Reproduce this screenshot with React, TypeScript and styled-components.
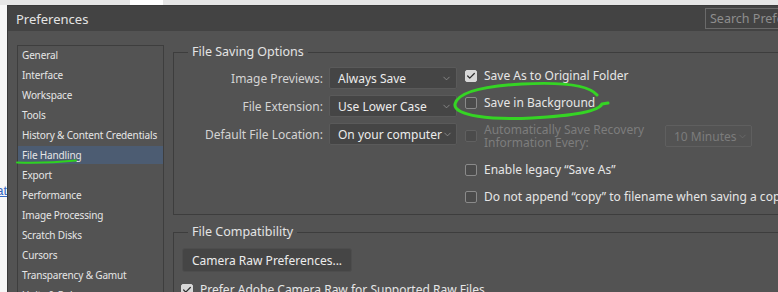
import React from 'react';
import styled, { createGlobalStyle } from 'styled-components';
import { ChevronDown, Check } from 'lucide-react';

const GlobalStyle = createGlobalStyle`
  html, body {
    margin: 0;
    padding: 0;
    background: #ffffff;
    overflow: hidden;
  }
  * { box-sizing: border-box; }
`;

const FONT = `'Noto Sans', 'Open Sans', sans-serif`;

const Page = styled.div`
  width: 778px;
  height: 292px;
  overflow: hidden;
  display: flex;
  flex-direction: column;
  font-family: ${FONT};
  position: relative;
`;

const TopStrip = styled.div`
  height: 5px;
  flex-shrink: 0;
  background: linear-gradient(
    to right,
    #e6e6e6 0,
    #e6e6e6 130px,
    #ffffff 130px,
    #ffffff 163px,
    #e6e6e6 163px
  );
`;

const Row = styled.div`
  display: flex;
  flex: 1;
  min-height: 0;
`;

const Gutter = styled.div`
  width: 7px;
  flex-shrink: 0;
  background: #f7f7f7;
  overflow: hidden;
  display: flex;
  justify-content: flex-end;
  padding-top: 178px;
`;

const PageLink = styled.a`
  font-family: 'Liberation Sans', Arial, sans-serif;
  font-size: 13px;
  color: #3568c2;
  text-decoration: underline;
  white-space: nowrap;
  flex-shrink: 0;
  line-height: 16px;
  height: 16px;
`;

const Dialog = styled.div`
  width: 900px;
  flex-shrink: 0;
  background: #535353;
  border-left: 1px solid #3a3a3a;
  border-top: 1px solid #3a3a3a;
  display: flex;
  flex-direction: column;
  color: #e2e2e2;
`;

const TitleBar = styled.div`
  height: 25px;
  flex-shrink: 0;
  background: #434343;
  display: grid;
  grid-template-columns: 697px 1fr;
  align-items: center;
`;

const Title = styled.div`
  padding-left: 8px;
  font-size: 13px;
  color: #e4e4e4;
`;

const SearchBox = styled.div`
  height: 21px;
  border: 1px solid #6a6a6a;
  border-right: none;
  display: flex;
  align-items: center;
  padding-left: 4px;
  font-size: 12.5px;
  color: #8e8e8e;
  white-space: nowrap;
`;

const Body = styled.div`
  display: flex;
  gap: 9px;
  padding: 13px 0 0 9px;
  flex: 1;
  min-height: 0;
`;

const Sidebar = styled.ul`
  list-style: none;
  margin: 1px 0 0 0;
  padding: 0;
  width: 147px;
  flex-shrink: 0;
  border: 1px solid #3e3e3e;
  border-bottom: none;
`;

const NavItem = styled.li<{ $active?: boolean }>`
  height: 18px;
  margin-bottom: 2px;
  padding-left: 4px;
  display: flex;
  align-items: center;
  font-size: 10px;
  letter-spacing: -0.15px;
  white-space: nowrap;
  color: #e6e6e6;
  background: ${(p) => (p.$active ? '#4c5c72' : 'transparent')};
`;

const Content = styled.div`
  width: 700px;
  flex-shrink: 0;
  display: flex;
  flex-direction: column;
`;

const Group = styled.fieldset<{ $gapTop?: number }>`
  margin: ${(p) => p.$gapTop ?? 0}px 0 0 0;
  padding: 2px 0 4px 0;
  border: 1px solid #3d3d3d;
  min-width: 0;
`;

const GroupTitle = styled.legend`
  margin-left: 14px;
  padding: 0 4px;
  font-size: 12.5px;
  line-height: 16px;
  color: #e4e4e4;
`;

const SavingLayout = styled.div`
  display: flex;
  gap: 8px;
`;

const FormGrid = styled.div`
  display: grid;
  grid-template-columns: 149px 128px;
  grid-auto-rows: 22px;
  column-gap: 6px;
  row-gap: 6px;
  padding-top: 5px;
  align-content: start;
`;

const FieldLabel = styled.div`
  text-align: right;
  align-self: center;
  font-size: 12px;
  color: #d4d4d4;
  white-space: nowrap;
`;

const Select = styled.div<{ $disabled?: boolean; $width?: number }>`
  height: 22px;
  width: ${(p) => (p.$width ? `${p.$width}px` : 'auto')};
  flex-shrink: 0;
  border: 1px solid ${(p) => (p.$disabled ? '#5f5f5f' : '#5a5a5a')};
  border-radius: 2px;
  background: ${(p) => (p.$disabled ? 'transparent' : '#454545')};
  display: flex;
  align-items: center;
  justify-content: space-between;
  padding: 0 4px 0 8px;
  font-size: 12px;
  white-space: nowrap;
  overflow: hidden;
  color: ${(p) => (p.$disabled ? '#7c7c7c' : '#ececec')};

  svg {
    flex-shrink: 0;
    color: ${(p) => (p.$disabled ? '#707070' : '#a0a0a0')};
  }
`;

const Options = styled.div`
  display: flex;
  flex-direction: column;
`;

const Option = styled.div<{ $tall?: boolean }>`
  display: flex;
  align-items: center;
  height: ${(p) => (p.$tall ? 40 : 27)}px;
  white-space: nowrap;
`;

const Box = styled.span<{ $checked?: boolean; $disabled?: boolean }>`
  width: 12px;
  height: 12px;
  flex-shrink: 0;
  border-radius: 2px;
  margin-right: 7px;
  display: flex;
  align-items: center;
  justify-content: center;
  border: 1px solid
    ${(p) => (p.$checked ? '#d8d8d8' : p.$disabled ? '#606060' : '#8a8a8a')};
  background: ${(p) => (p.$checked ? '#d8d8d8' : '#4b4b4b')};
  color: #2e2e2e;
`;

const OptionText = styled.span<{ $disabled?: boolean; $width?: number }>`
  font-size: 12px;
  line-height: 13px;
  color: ${(p) => (p.$disabled ? '#7d7d7d' : '#e6e6e6')};
  width: ${(p) => (p.$width ? `${p.$width}px` : 'auto')};
  white-space: ${(p) => (p.$width ? 'normal' : 'nowrap')};
`;

const CompatBody = styled.div`
  padding: 6px 0 0 8px;
  display: flex;
  flex-direction: column;
`;

const RawButton = styled.button`
  width: 170px;
  height: 24px;
  font-family: ${FONT};
  font-size: 12px;
  white-space: nowrap;
  color: #ececec;
  background: #454545;
  border: 1px solid #4d4d4d;
  border-radius: 3px;
  text-align: left;
  padding: 0 9px;
`;

const CompatOption = styled(Option)`
  margin-top: 4px;
  margin-left: -1px;
`;

const Annotations = styled.svg`
  position: absolute;
  top: 0;
  left: 0;
  pointer-events: none;
`;

const navItems = [
  'General',
  'Interface',
  'Workspace',
  'Tools',
  'History & Content Credentials',
  'File Handling',
  'Export',
  'Performance',
  'Image Processing',
  'Scratch Disks',
  'Cursors',
  'Transparency & Gamut',
  'Units & Rulers',
];

const fields = [
  { label: 'Image Previews:', value: 'Always Save' },
  { label: 'File Extension:', value: 'Use Lower Case' },
  { label: 'Default File Location:', value: 'On your computer' },
];

const CheckBox: React.FC<{ checked?: boolean; disabled?: boolean }> = ({ checked, disabled }) => (
  <Box $checked={checked} $disabled={disabled}>
    {checked && <Check size={10} strokeWidth={3} />}
  </Box>
);

export default function App() {
  return (
    <>
      <GlobalStyle />
      <Page>
        <TopStrip />
        <Row>
          <Gutter>
            <PageLink href="#">Format</PageLink>
          </Gutter>
          <Dialog>
            <TitleBar>
              <Title>Preferences</Title>
              <SearchBox>Search Preferences</SearchBox>
            </TitleBar>
            <Body>
              <Sidebar>
                {navItems.map((item) => (
                  <NavItem key={item} $active={item === 'File Handling'}>
                    {item}
                  </NavItem>
                ))}
              </Sidebar>
              <Content>
                <Group>
                  <GroupTitle>File Saving Options</GroupTitle>
                  <SavingLayout>
                    <FormGrid>
                      {fields.map((f) => (
                        <React.Fragment key={f.label}>
                          <FieldLabel>{f.label}</FieldLabel>
                          <Select>
                            {f.value}
                            <ChevronDown size={11} strokeWidth={1.5} />
                          </Select>
                        </React.Fragment>
                      ))}
                    </FormGrid>
                    <Options>
                      <Option>
                        <CheckBox checked />
                        <OptionText>Save As to Original Folder</OptionText>
                      </Option>
                      <Option>
                        <CheckBox />
                        <OptionText>Save in Background</OptionText>
                      </Option>
                      <Option $tall>
                        <CheckBox disabled />
                        <OptionText $disabled $width={181}>
                          Automatically Save Recovery Information Every:
                        </OptionText>
                        <Select $disabled $width={87}>
                          10 Minutes
                          <ChevronDown size={11} strokeWidth={1.5} />
                        </Select>
                      </Option>
                      <Option>
                        <CheckBox />
                        <OptionText>Enable legacy “Save As”</OptionText>
                      </Option>
                      <Option>
                        <CheckBox />
                        <OptionText>Do not append “copy” to filename when saving a copy</OptionText>
                      </Option>
                    </Options>
                  </SavingLayout>
                </Group>
                <Group $gapTop={9}>
                  <GroupTitle>File Compatibility</GroupTitle>
                  <CompatBody>
                    <RawButton>Camera Raw Preferences...</RawButton>
                    <CompatOption>
                      <CheckBox checked />
                      <OptionText>Prefer Adobe Camera Raw for Supported Raw Files</OptionText>
                    </CompatOption>
                  </CompatBody>
                </Group>
              </Content>
            </Body>
          </Dialog>
        </Row>
        <Annotations width="778" height="292" viewBox="0 0 778 292">
          <path
            d="M17 162.5 Q 46 163.5 76 160.5"
            fill="none"
            stroke="#2fd21f"
            strokeWidth="2"
            strokeLinecap="round"
          />
          <path
            d="M597 95 C 588 84, 560 82, 522 84 C 484 86, 458 92, 455 104 C 453 116, 492 120, 532 118 C 570 116, 598 112, 602 104 L 608 103"
            fill="none"
            stroke="#35d424"
            strokeWidth="3"
            strokeLinecap="round"
            strokeLinejoin="round"
          />
        </Annotations>
      </Page>
    </>
  );
}
